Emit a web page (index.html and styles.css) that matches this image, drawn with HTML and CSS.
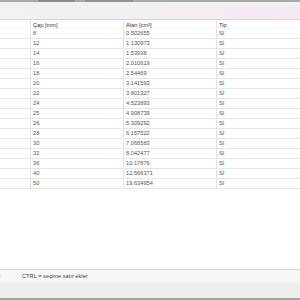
FILE: index.html
```html
<!DOCTYPE html>
<html>
<head>
<meta charset="utf-8">
<link rel="stylesheet" href="styles.css">
</head>
<body>
<div class="app">
  <div class="topstrip">
    <span class="seg s1"></span><span class="seg s2"></span><span class="seg s3"></span>
  </div>
  <div class="toolbar"></div>
  <div class="grid">
    <div class="row head">
      <div class="c c0"></div><div class="c">Çap [mm]</div><div class="c">Alan [cm²]</div><div class="c">Tip</div>
    </div>
    <div class="row"><div class="c c0"></div><div class="c">8</div><div class="c">0.502655</div><div class="c">SI</div></div>
    <div class="row"><div class="c c0"></div><div class="c">12</div><div class="c">1.130973</div><div class="c">SI</div></div>
    <div class="row"><div class="c c0"></div><div class="c">14</div><div class="c">1.53938</div><div class="c">SI</div></div>
    <div class="row"><div class="c c0"></div><div class="c">16</div><div class="c">2.010619</div><div class="c">SI</div></div>
    <div class="row"><div class="c c0"></div><div class="c">18</div><div class="c">2.54469</div><div class="c">SI</div></div>
    <div class="row"><div class="c c0"></div><div class="c">20</div><div class="c">3.141593</div><div class="c">SI</div></div>
    <div class="row"><div class="c c0"></div><div class="c">22</div><div class="c">3.801327</div><div class="c">SI</div></div>
    <div class="row"><div class="c c0"></div><div class="c">24</div><div class="c">4.523893</div><div class="c">SI</div></div>
    <div class="row"><div class="c c0"></div><div class="c">25</div><div class="c">4.908739</div><div class="c">SI</div></div>
    <div class="row"><div class="c c0"></div><div class="c">26</div><div class="c">5.309292</div><div class="c">SI</div></div>
    <div class="row"><div class="c c0"></div><div class="c">28</div><div class="c">6.157522</div><div class="c">SI</div></div>
    <div class="row"><div class="c c0"></div><div class="c">30</div><div class="c">7.068583</div><div class="c">SI</div></div>
    <div class="row"><div class="c c0"></div><div class="c">32</div><div class="c">8.042477</div><div class="c">SI</div></div>
    <div class="row"><div class="c c0"></div><div class="c">36</div><div class="c">10.17876</div><div class="c">SI</div></div>
    <div class="row"><div class="c c0"></div><div class="c">40</div><div class="c">12.566371</div><div class="c">SI</div></div>
    <div class="row"><div class="c c0"></div><div class="c">50</div><div class="c">19.634954</div><div class="c">SI</div></div>
  </div>
  <div class="status">
    <span class="cut">i</span><span class="hint">CTRL = seçime satır ekler</span>
  </div>
  <div class="lower"></div>
  <div class="bottomstrip"></div>
</div>
</body>
</html>
```

FILE: styles.css
```css
html, body {
  margin: 0;
  padding: 0;
  background: #ffffff;
}
.app {
  width: 300px;
  height: 300px;
  display: flex;
  flex-direction: column;
  overflow: hidden;
  font-family: "Liberation Sans", Arial, sans-serif;
  font-size: 5.7px;
  color: #555;
}
.topstrip {
  height: 2px;
  background: #a9a9a9;
  display: flex;
}
.seg { display: block; height: 2px; }
.s1 { width: 38px; }
.s2 { width: 37px; background: #8c8c8c; }
.s3 { width: 48px; margin-left: 10px; background: #939393; }
.toolbar {
  height: 17px;
  background:
    linear-gradient(to bottom, #f1f1f1 0, #f1f1f1 3px, rgba(255,255,255,0) 3px),
    linear-gradient(to right, #f2f1f3 0%, #f4eef5 50%, #f7e9f4 100%);
  border-bottom: 1px solid #d4d4d4;
}
.grid {
  flex: 1;
  background: #fff;
}
.row {
  display: grid;
  grid-template-columns: 31px 93px 93px 1fr;
  height: 10px;
  border-bottom: 1px solid #e6e6e6;
  box-sizing: border-box;
}
.row.head {
  height: 9px;
  border-bottom: 1px solid #f4f4f4;
  color: #333;
}
.row.head .c {
  line-height: 10px;
}
.c {
  border-right: 1px solid #e2e2e2;
  padding-left: 2px;
  line-height: 9px;
  white-space: nowrap;
  overflow: hidden;
}
.c:last-child { border-right: none; }
.c0 { padding-left: 0; }
.status {
  height: 12px;
  border-top: 1px solid #cfcfcf;
  background: #f7f7f7;
  display: flex;
  align-items: center;
  color: #444;
}
.cut {
  width: 2px;
  overflow: hidden;
  margin-left: -1px;
}
.hint {
  margin-left: 21px;
}
.lower {
  height: 16px;
  background: #eeeeee;
}
.bottomstrip {
  height: 2px;
  background: #a4a4a4;
}
```
